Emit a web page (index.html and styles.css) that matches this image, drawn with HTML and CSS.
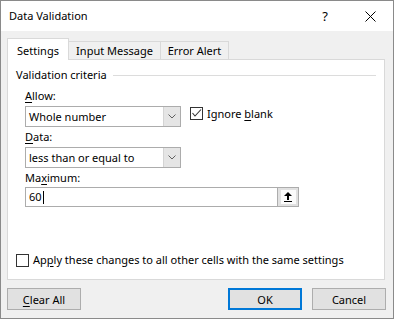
FILE: index.html
```html
<!DOCTYPE html>
<html lang="en">
<head>
  <meta charset="UTF-8">
  <title>Data Validation</title>
  <link rel="stylesheet" href="styles.css">
</head>
<body>

  <div class="dialog">
    <div class="titlebar">
      <span class="title">Data Validation</span>
      <span class="help">?</span>
      <svg class="close" width="11" height="11" viewBox="0 0 11 11">
        <path d="M0.5 0.5 L10.5 10.5 M10.5 0.5 L0.5 10.5" stroke="#000" stroke-width="1" fill="none"/>
      </svg>
    </div>

    <div class="main">
      <div class="tabs">
        <div class="tab active">Settings</div>
        <div class="tab tab-msg">Input Message</div>
        <div class="tab tab-err">Error Alert</div>
      </div>

      <div class="panel">
        <div class="group-title">
          <span>Validation criteria</span>
          <span class="rule"></span>
        </div>

        <div class="fields">
          <span class="lbl lbl-allow"><u>A</u>llow:</span>
          <div class="row">
            <div class="combo">
              <span class="combo-text">Whole number</span>
              <span class="drop">
                <svg width="8" height="5" viewBox="0 0 8 5"><path d="M0.5 0.5 L4 4 L7.5 0.5" stroke="#606060" fill="none"/></svg>
              </span>
            </div>
            <label class="check check-blank">
              <span class="box">
                <svg width="11" height="11" viewBox="0 0 11 11"><path d="M1.5 5 L4 8 L10 1.5" stroke="#333" stroke-width="1.1" fill="none"/></svg>
              </span>
              <span>Ignore <u>b</u>lank</span>
            </label>
          </div>

          <span class="lbl"><u>D</u>ata:</span>
          <div class="combo">
            <span class="combo-text">less than or equal to</span>
            <span class="drop">
              <svg width="8" height="5" viewBox="0 0 8 5"><path d="M0.5 0.5 L4 4 L7.5 0.5" stroke="#606060" fill="none"/></svg>
            </span>
          </div>

          <span class="lbl">Ma<u>x</u>imum:</span>
          <div class="input">
            <span class="input-text">60</span><span class="caret"></span>
            <span class="pick">
              <span class="pick-face">
                <svg width="8" height="10" viewBox="0 0 8 10"><path d="M4 0 L0 4 L3 4 L3 8 L5 8 L5 4 L8 4 Z M0 9 L8 9 L8 10 L0 10 Z" fill="#000"/></svg>
              </span>
            </span>
          </div>
        </div>

        <label class="check check-apply">
          <span class="box"></span>
          <span>Ap<u>p</u>ly these changes to all other cells with the same settings</span>
        </label>
      </div>

      <div class="buttons">
        <button class="btn btn-clear"><u>C</u>lear All</button>
        <button class="btn btn-ok">OK</button>
        <button class="btn">Cancel</button>
      </div>
    </div>
  </div>

</body>
</html>
```

FILE: styles.css
```css
* {
  box-sizing: border-box;
}
body {
  margin: 0;
  font-family: "Noto Sans", sans-serif;
  font-size: 11px;
  line-height: 16px;
  color: #000;
}
u {
  text-decoration-thickness: 1px;
  text-underline-offset: 2px;
}
.dialog {
  width: 394px;
  height: 319px;
  border: 1px solid #8a8a8a;
  background: #f0f0f0;
  display: flex;
  flex-direction: column;
}
.titlebar {
  flex: none;
  height: 30px;
  background: #fff;
  display: flex;
  align-items: center;
  padding: 0 17px 0 8px;
}
.help {
  margin-left: auto;
  font-size: 13px;
  margin-right: 37px;
}
.main {
  flex: 1;
  display: flex;
  flex-direction: column;
  padding: 7px 8px 0 6px;
}
.tabs {
  display: flex;
  align-items: flex-end;
}
.tab {
  height: 18px;
  border: 1px solid #d9d9d9;
  border-bottom: none;
  background: #f0f0f0;
  display: flex;
  align-items: center;
  justify-content: center;
  padding-top: 1px;
  margin-left: -1px;
}
.tab.active {
  width: 62px;
  height: 22px;
  margin-left: 0;
  margin-bottom: -1px;
  padding-top: 3px;
  background: #fff;
  position: relative;
  z-index: 1;
}
.tab-msg {
  width: 93px;
}
.tab-err {
  width: 69px;
}
.panel {
  width: 378px;
  height: 221px;
  border: 1px solid #d9d9d9;
  background: #fff;
  padding: 7px 8px 0 8px;
  display: flex;
  flex-direction: column;
}
.group-title {
  display: flex;
  align-items: center;
  height: 16px;
}
.rule {
  flex: 1;
  height: 1px;
  background: #dcdcdc;
  margin-left: 6px;
}
.fields {
  margin-left: 9px;
  display: flex;
  flex-direction: column;
  align-items: flex-start;
}
.lbl {
  display: block;
  margin-top: 2px;
}
.lbl-allow {
  margin-top: 5px;
}
.row {
  display: flex;
  align-items: flex-start;
}
.combo {
  width: 156px;
  height: 21px;
  margin-top: 2px;
  border: 1px solid #acacac;
  background: #fff;
  display: flex;
}
.combo-text {
  flex: 1;
  padding-left: 3px;
  line-height: 19px;
}
.drop {
  width: 17px;
  background: #e5e5e5;
  border-left: 1px solid #d4d4d4;
  display: flex;
  align-items: center;
  justify-content: center;
}
.check {
  display: flex;
  align-items: center;
  gap: 4px;
}
.check-blank {
  margin: 0 0 0 9px;
  height: 13px;
  margin-top: 3px;
}
.box {
  width: 13px;
  height: 13px;
  border: 1px solid #333;
  background: #fff;
  display: flex;
  align-items: center;
  justify-content: center;
}
.input {
  width: 274px;
  height: 20px;
  margin-top: 1px;
  border: 1px solid #acacac;
  background: #fff;
  display: flex;
  align-items: center;
}
.input-text {
  padding-left: 3px;
  line-height: 18px;
}
.caret {
  width: 1px;
  height: 13px;
  background: #000;
  margin-left: 1px;
}
.pick {
  margin-left: auto;
  width: 21px;
  height: 18px;
  border-left: 1px solid #adadad;
  background: #e1e1e1;
  display: flex;
  align-items: center;
  justify-content: center;
}
.pick-face {
  width: 15px;
  height: 14px;
  background: #fbfbfb;
  display: flex;
  align-items: center;
  justify-content: center;
}
.check-apply {
  margin-top: auto;
  margin-bottom: 11px;
  height: 16px;
}
.buttons {
  display: flex;
  gap: 10px;
  margin-top: 8px;
  margin-right: -1px;
}
.btn {
  width: 74px;
  height: 22px;
  border: 1px solid #adadad;
  background: #e1e1e1;
  font-family: "Noto Sans", sans-serif;
  font-size: 11px;
  color: #000;
  padding: 0;
}
.btn-clear {
  margin-right: auto;
}
.btn-ok {
  border: 2px solid #0078d7;
}
```
